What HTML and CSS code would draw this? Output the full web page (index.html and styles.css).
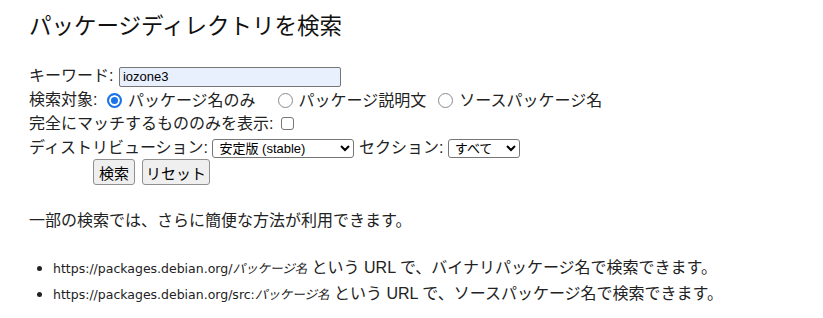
FILE: index.html
```html
<!DOCTYPE html>
<html lang="ja">
<head>
<meta charset="utf-8">
<title>パッケージディレクトリを検索</title>
<link rel="stylesheet" href="styles.css">
</head>
<body>
<div class="page">
  <h1 class="title">パッケージディレクトリを検索</h1>
  <form class="search">
    <div class="row">キーワード: <input class="kw" type="text" value="iozone3"></div>
    <div class="row">検索対象: <label class="opt first"><input type="radio" name="s" checked>パッケージ名のみ</label><label class="opt second"><input type="radio" name="s">パッケージ説明文</label><label class="opt third"><input type="radio" name="s">ソースパッケージ名</label></div>
    <div class="row">完全にマッチするもののみを表示: <input type="checkbox"></div>
    <div class="row">ディストリビューション: <select class="dist"><option>安定版 (stable)</option></select> セクション: <select class="sec"><option>すべて</option></select></div>
    <div class="row buttons"><button type="button">検索</button><button type="button" class="reset">リセット</button></div>
  </form>
  <p class="note">一部の検索では、さらに簡便な方法が利用できます。</p>
  <ul class="tips">
    <li><code>https://packages.debian.org/<var>パッケージ名</var></code> という URL で、バイナリパッケージ名で検索できます。</li>
    <li><code>https://packages.debian.org/src:<var>パッケージ名</var></code> という URL で、ソースパッケージ名で検索できます。</li>
  </ul>
</div>
</body>
</html>
```
FILE: styles.css
```css
html, body {
  margin: 0;
  padding: 0;
  background: #fff;
}
body {
  font-family: "Liberation Sans", "Noto Sans CJK JP", sans-serif;
  font-size: 16px;
  color: #222;
}
.page {
  padding: 14px 29px 0;
}
.title {
  font-size: 22.5px;
  font-weight: normal;
  margin: 0 0 24px;
  line-height: 26px;
  color: #111;
}
.search .row {
  line-height: 24px;
  height: 24px;
  white-space: nowrap;
}
.search .row > *, .opt > * {
  vertical-align: middle;
}
.kw {
  box-sizing: border-box;
  width: 222px;
  height: 20px;
  padding: 0 3px;
  margin: 0 0 0 1px;
  border: 1px solid #767676;
  border-radius: 2px;
  background: #e8f0fe;
  font: 13px "Liberation Sans", sans-serif;
  color: #000;
}
.opt {
  display: inline-block;
}
.opt.first { margin-left: 5px; }
.opt.second { margin-left: 22px; }
.opt.third { margin-left: 12px; }
input[type=radio] {
  appearance: none;
  -webkit-appearance: none;
  box-sizing: border-box;
  width: 15px;
  height: 15px;
  margin: -2px 6px 0 0;
  border: 1px solid #8a8a8a;
  border-radius: 50%;
  background: #fff;
}
input[type=radio]:checked {
  border: 2px solid #1a73e8;
  box-shadow: inset 0 0 0 2px #fff;
  background: #1a73e8;
}
input[type=checkbox] {
  appearance: none;
  -webkit-appearance: none;
  box-sizing: border-box;
  width: 13px;
  height: 13px;
  margin: -2px 0 0 3px;
  border: 1px solid #767676;
  border-radius: 3px;
  background: #fff;
}
select {
  box-sizing: border-box;
  height: 19px;
  font: 13px "Liberation Sans", "Noto Sans CJK JP", sans-serif;
  color: #000;
  border: 1px solid #767676;
  border-radius: 3px;
  background: #fff;
  padding: 0 2px;
}
.dist { width: 142px; margin-left: 0; }
.sec { width: 72px; margin-left: 0; }
.buttons {
  height: 28px;
  line-height: 28px;
  padding-left: 64px;
  margin-top: 0;
}
.buttons button {
  box-sizing: border-box;
  height: 26px;
  font: 15px "Liberation Sans", "Noto Sans CJK JP", sans-serif;
  color: #000;
  background: #efefef;
  border: 1px solid #8f8f8f;
  border-radius: 3px;
  padding: 0 5px;
  margin-right: 7px;
  margin-top: -1px;
}
.buttons .reset {
  padding: 0 3px;
}
.note {
  margin: 24px 0 0;
  line-height: 26px;
}
.tips {
  margin: 21px 0 0;
  padding-left: 24px;
  line-height: 25px;
}
code {
  font-family: "DejaVu Sans", sans-serif;
  font-size: 12.5px;
}
var {
  font-family: "Noto Sans CJK JP", sans-serif;
  font-style: italic;
}
```
